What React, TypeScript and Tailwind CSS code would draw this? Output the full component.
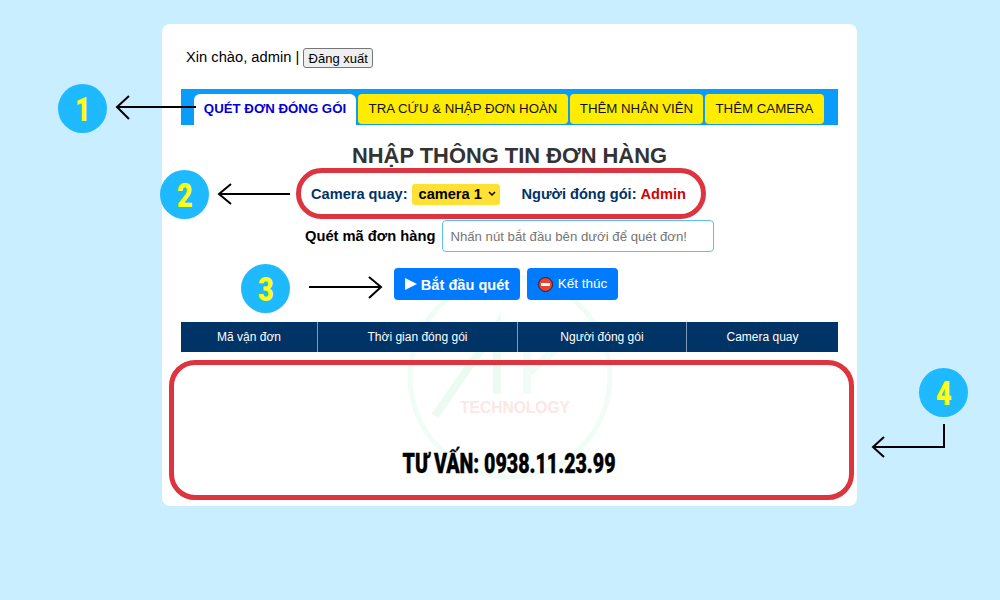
const tabs = [
  { label: "TRA CỨU & NHẬP ĐƠN HOÀN", width: "w-[210px]" },
  { label: "THÊM NHÂN VIÊN", width: "w-[133px]" },
  { label: "THÊM CAMERA", width: "w-[119px]" },
]

const columns = [
  { label: "Mã vận đơn", width: "w-[136px]" },
  { label: "Thời gian đóng gói", width: "w-[199px]" },
  { label: "Người đóng gói", width: "w-[168px]" },
  { label: "Camera quay", width: "flex-1" },
]

const badges = [
  { n: "1", place: "left-[58px] top-[84px]" },
  { n: "2", place: "left-[160px] top-[170px]" },
  { n: "3", place: "left-[241px] top-[264px]" },
  { n: "4", place: "left-[919px] top-[368px]" },
]

function Badge({ n, place }: { n: string; place: string }) {
  return (
    <div className={`absolute ${place} flex h-[49px] w-[49px] items-center justify-center rounded-full bg-[#1fb9ff]`}>
      <span className="origin-center scale-x-[0.8] font-['Roboto',sans-serif] text-[34px] leading-none font-black text-[#ffff14]">
        {n}
      </span>
    </div>
  )
}

function Arrows() {
  return (
    <svg className="pointer-events-none absolute top-0 left-0" width="1000" height="600" fill="none" stroke="#000" strokeWidth="2">
      <path d="M117 107H196M129 96l-12 11 12 12" />
      <path d="M219 194H290M231 184l-12 10 12 10" />
      <path d="M309 287H381M369 277l12 10-12 11" />
      <path d="M944 424V447H873M884 437l-11 10 11 10" />
    </svg>
  )
}

function Watermark() {
  return (
    <div className="pointer-events-none absolute top-[274px] left-[407px] h-[206px] w-[206px]">
      <svg width="206" height="206" fill="none">
        <circle cx="103" cy="103" r="100" stroke="#f0fcf5" strokeWidth="5" />
        <path d="M28 142L90 52V120" stroke="#ecfbf1" strokeWidth="8" />
        <path d="M120 78V120M120 100L152 72" stroke="#f0fcf5" strokeWidth="8" />
      </svg>
      <span className="absolute top-[122px] left-[53px] text-[15.6px] font-bold whitespace-nowrap text-[#fde6e6]">
        TECHNOLOGY
      </span>
    </div>
  )
}

export default function App() {
  return (
    <div className="relative h-[600px] w-[1000px] overflow-hidden bg-[#c8eeff] pt-6 font-['Liberation_Sans',Arial,sans-serif]">
      <div className="ml-[162px] h-[482px] w-[695px] rounded-lg bg-white px-[19px] pt-6">
        <Watermark />

        <div className="flex h-5 items-center pl-[5px] text-[14.7px] text-black">
          <span className="pb-[2px]">Xin chào, admin |</span>
          <button className="ml-[4px] h-5 w-[70px] rounded-[3px] border border-[#767676] bg-[#efefef] text-[13px] text-black">
            Đăng xuất
          </button>
        </div>

        <div className="mt-[21px] flex h-9 items-end gap-[2px] bg-[#0a9cfb] pl-[13px]">
          <div className="flex h-[31px] w-[162px] items-center justify-center rounded-t-md bg-white pb-[2px] text-[13.25px] font-bold text-[#0000d8]">
            QUÉT ĐƠN ĐÓNG GÓI
          </div>
          {tabs.map((tab) => (
            <div
              key={tab.label}
              className={`mb-px flex h-[30px] ${tab.width} items-center justify-center rounded-[4px] bg-[#ffec00] pb-[1px] text-[13.25px] text-[#111]`}
            >
              {tab.label}
            </div>
          ))}
        </div>

        <h1 className="mt-[17px] text-center text-[21.9px] leading-7 font-bold text-[#333]">NHẬP THÔNG TIN ĐƠN HÀNG</h1>

        <div className="mt-[12px] flex h-6 items-center pl-[130px] text-[14.6px] font-bold text-[#003366]">
          <span className="pt-[2px]">Camera quay:</span>
          <div className="ml-1 flex h-[21px] w-[88px] items-center rounded-[3px] bg-[#ffe135] pl-[7px] text-black">
            <span className="pt-[2px]">camera 1</span>
            <svg className="ml-[6px]" width="8" height="6" fill="none" stroke="#000" strokeWidth="1.5">
              <path d="M1 1l3 3 3-3" />
            </svg>
          </div>
          <span className="ml-[22px] pt-[2px]">Người đóng gói:</span>
          <span className="ml-1 pt-[2px] text-[#d40000]">Admin</span>
        </div>

        <div className="mt-[14px] flex h-8 items-center pl-[124px]">
          <span className="text-[14.7px] font-bold text-black">Quét mã đơn hàng</span>
          <input
            readOnly
            placeholder="Nhấn nút bắt đầu bên dưới để quét đơn!"
            className="ml-[7px] h-8 w-[272px] rounded-[4px] border border-[#5bc0eb] px-[7px] text-[13.2px] outline-none placeholder:text-[#757575]"
          />
        </div>

        <div className="relative mt-4 flex gap-[7px] pl-[213px]">
          <button className="flex h-8 w-[126px] items-center justify-center gap-[4px] rounded-[4px] bg-[#007bff] text-[14.6px] font-bold text-white">
            <svg width="12" height="12" fill="#fff">
              <path d="M0 0L12 6L0 12Z" />
            </svg>
            <span className="pt-[3px]">Bắt đầu quét</span>
          </button>
          <button className="flex h-8 w-[91px] items-center justify-center gap-[5px] rounded-[4px] bg-[#007bff] text-[13.5px] text-white">
            <svg width="15" height="15">
              <circle cx="7.5" cy="7.5" r="7" fill="#e8432e" stroke="#3a1a1a" />
              <rect x="3" y="6" width="9" height="3" fill="#fff" />
            </svg>
            Kết thúc
          </button>
        </div>

        <div className="relative mt-[22px] flex h-[30px] gap-px bg-[#7f9ab5] text-xs text-white">
          {columns.map((col) => (
            <div key={col.label} className={`flex ${col.width} items-center justify-center bg-[#003366]`}>
              {col.label}
            </div>
          ))}
        </div>

        <p className="relative mt-[96px] text-center font-['Roboto',sans-serif] text-[28px] leading-8 font-black text-black">
          <span className="inline-block scale-x-[0.7] whitespace-nowrap [-webkit-text-stroke:0.4px_#000]">
            TƯ VẤN: 0938.11.23.99
          </span>
        </p>
      </div>

      <div className="pointer-events-none absolute top-[168px] left-[296px] h-[51px] w-[410px] rounded-[26px] border-[5px] border-[#dc3540]" />
      <div className="pointer-events-none absolute top-[360px] left-[169px] h-[140px] w-[685px] rounded-[26px] border-[5px] border-[#dc3540]" />
      <Arrows />
      {badges.map((b) => (
        <Badge key={b.n} n={b.n} place={b.place} />
      ))}
    </div>
  )
}
